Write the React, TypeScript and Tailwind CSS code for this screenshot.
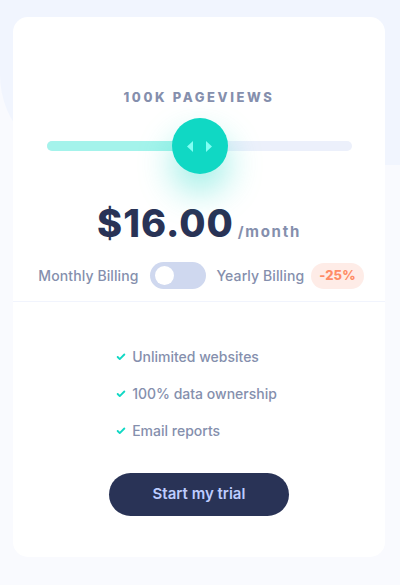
import { Check } from 'lucide-react'

const features = ['Unlimited websites', '100% data ownership', 'Email reports']

export default function App() {
  return (
    <div
      className="relative w-[400px] h-[585px] overflow-hidden bg-[#f9fafe]"
      style={{ fontFamily: 'Inter, "Open Sans", sans-serif' }}
    >
      {/* background pattern */}
      <div className="absolute left-0 top-0 w-[400px] h-[165px] bg-[#f1f5fe] rounded-bl-[90px]" />

      <div className="relative mx-[13px] mt-[17px] w-[372px] h-[540px] rounded-[15px] bg-white flex flex-col">
        <div className="flex flex-col items-center pt-[71px] pb-[12px]">
          <p className="text-[13px] leading-[18px] font-extrabold tracking-[2.6px] text-[#858fad]">
            100K PAGEVIEWS
          </p>

          {/* slider */}
          <div className="relative mt-[12px] w-[305px] h-[56px] flex items-center">
            <div className="w-full h-[10px] rounded-full bg-[#ecf0fb] flex">
              <div className="w-[153px] h-full rounded-l-full bg-[#a4f3eb]" />
            </div>
            <div className="absolute left-[125px] top-0 w-[56px] h-[56px] rounded-full bg-[#10d8c4] flex items-center justify-center gap-[11px] shadow-[0_18px_34px_rgba(16,216,196,0.4)]">
              <svg width="7" height="11" viewBox="0 0 7 11">
                <path d="M6 0 L0 5.5 L6 11 Z" fill="#80fff3" />
              </svg>
              <svg width="7" height="11" viewBox="0 0 7 11">
                <path d="M1 0 L7 5.5 L1 11 Z" fill="#80fff3" />
              </svg>
            </div>
          </div>

          {/* price */}
          <div className="mt-[28px] flex items-baseline">
            <span className="text-[38px] leading-[42px] font-extrabold tracking-[1px] text-[#293356]">$16.00</span>
            <span className="ml-[4px] text-[15px] font-bold tracking-[1.7px] text-[#858fad]">/month</span>
          </div>

          {/* billing toggle */}
          <div className="mt-[18px] ml-[4px] flex items-center text-[14px] tracking-[0.1px] text-[#858fad] font-medium">
            <span className="mr-[11px]">Monthly Billing</span>
            <div className="w-[56px] h-[27px] rounded-full bg-[#cfd8ef] flex items-center pl-[5px]">
              <div className="w-[19px] h-[19px] rounded-full bg-white" />
            </div>
            <span className="ml-[11px]">Yearly Billing</span>
            <span className="ml-[7px] h-[26px] px-[8px] rounded-full bg-[#feece7] text-[#ff8c66] text-[13px] font-extrabold flex items-center">
              -25%
            </span>
          </div>
        </div>

        <div className="h-px bg-[#f1f4fd]" />

        <div className="flex flex-col items-center pt-[44px]">
          <ul className="flex flex-col gap-[16px] pr-[5px]">
            {features.map(f => (
              <li key={f} className="flex items-center gap-[6px] h-[21px] text-[14px] text-[#858fad] font-medium">
                <Check size={10} strokeWidth={4.5} className="text-[#10d8c4]" />
                {f}
              </li>
            ))}
          </ul>
          <button className="mt-[32px] w-[180px] h-[43px] rounded-full bg-[#293356] text-[#bdccff] text-[15px] font-semibold">
            Start my trial
          </button>
        </div>
      </div>
    </div>
  )
}
